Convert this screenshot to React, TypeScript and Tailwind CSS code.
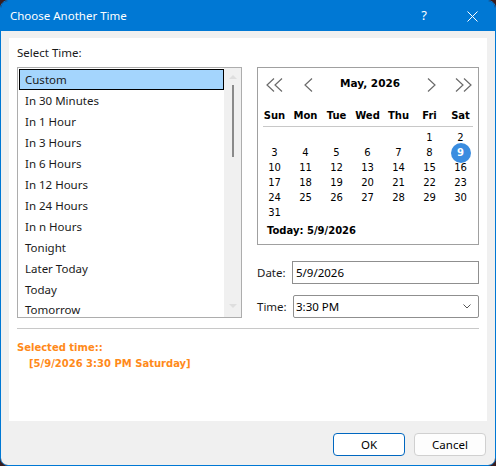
import React from 'react';

const ui = "font-['Segoe_UI','Noto_Sans',sans-serif]";
const tah = "font-['DejaVu_Sans',sans-serif]";

const items = [
  'Custom',
  'In 30 Minutes',
  'In 1 Hour',
  'In 3 Hours',
  'In 6 Hours',
  'In 12 Hours',
  'In 24 Hours',
  'In n Hours',
  'Tonight',
  'Later Today',
  'Today',
  'Tomorrow',
];

const weekdays = ['Sun', 'Mon', 'Tue', 'Wed', 'Thu', 'Fri', 'Sat'];

// May 2026 starts on a Friday
const weeks: (number | null)[][] = [
  [null, null, null, null, null, 1, 2],
  [3, 4, 5, 6, 7, 8, 9],
  [10, 11, 12, 13, 14, 15, 16],
  [17, 18, 19, 20, 21, 22, 23],
  [24, 25, 26, 27, 28, 29, 30],
  [31, null, null, null, null, null, null],
];

function Chevron({ dir, double }: { dir: 'l' | 'r'; double?: boolean }) {
  const w = double ? 17 : 9;
  const one = (x: number) =>
    dir === 'l' ? `${x + 8},0.5 ${x + 1},7 ${x + 8},13.5` : `${x + 1},0.5 ${x + 8},7 ${x + 1},13.5`;
  return (
    <svg width={w} height={14} viewBox={`0 0 ${w} 14`} className="block">
      <polyline points={one(0)} fill="none" stroke="#6b6b6b" strokeWidth="1.2" />
      {double && <polyline points={one(8)} fill="none" stroke="#6b6b6b" strokeWidth="1.2" />}
    </svg>
  );
}

function Calendar() {
  return (
    <div className={`w-[222px] h-[178px] border border-[#a0a0a0] bg-white ${tah} text-[10px] text-black`}>
      {/* Nav */}
      <div className="flex items-center h-[24px] mt-[5px] pl-[8px] pr-[6px]">
        <Chevron dir="l" double />
        <div className="ml-[21px]">
          <Chevron dir="l" />
        </div>
        <div className="flex-1 text-center font-bold text-[10.5px] -mt-[3px]">May, 2026</div>
        <Chevron dir="r" />
        <div className="ml-[19px]">
          <Chevron dir="r" double />
        </div>
      </div>

      {/* Weekday header */}
      <div className="grid grid-cols-[repeat(7,31px)] ml-[1px] mt-[11px] h-[16px] leading-[16px] font-bold">
        {weekdays.map((d) => (
          <div key={d} className="text-center">{d}</div>
        ))}
      </div>
      <div className="h-px bg-[#c8c8c8] ml-[5px] w-[210px] mt-[2px]" />

      {/* Days */}
      <div className="mt-[3px] ml-[1px]">
        {weeks.map((w, i) => (
          <div key={i} className="grid grid-cols-[repeat(7,31px)] h-[15px] leading-[15px]">
            {w.map((d, j) => (
              <div key={j} className="relative text-center">
                {d === 9 ? (
                  <span className="absolute left-1/2 top-1/2 -translate-x-1/2 -translate-y-1/2 w-[20px] h-[20px] rounded-full bg-[#3b8de0] text-white font-bold flex items-center justify-center">
                    9
                  </span>
                ) : (
                  d ?? ''
                )}
              </div>
            ))}
          </div>
        ))}
      </div>

      <div className="mt-[4px] ml-[9px] font-bold h-[14px] leading-[14px]">Today: 5/9/2026</div>
    </div>
  );
}

export default function App() {
  return (
    <div className="w-[496px] h-[466px] bg-[#3a1c1c]">
      <div className={`w-full h-full rounded-[8px] overflow-hidden border border-[#0078d4] flex flex-col ${ui}`}>
        {/* Title bar */}
        <div className="h-[30px] bg-[#0078d4] flex items-center text-white text-[11.5px] shrink-0">
          <span className="ml-[9px]">Choose Another Time</span>
          <span className="ml-auto w-[14px] text-center text-[13px] mr-[36px]">?</span>
          <svg width="11" height="11" viewBox="0 0 11 11" className="mr-[17px]">
            <path d="M0.5 0.5 L10.5 10.5 M10.5 0.5 L0.5 10.5" stroke="white" strokeWidth="1" />
          </svg>
        </div>

        {/* Body */}
        <div className="flex-1 bg-[#f0f0f0] pt-[7px] pl-[8px]">
          <div className="w-[478px] h-[383px] bg-white pl-[8px] pt-[7px] text-[11.5px] text-[#1a1a1a]">
            <div className="h-[16px] leading-[16px]">Select Time:</div>

            <div className="flex mt-[6px]">
              {/* Options list */}
              <div className="w-[225px] h-[251px] border border-[#adadad] flex overflow-hidden">
                <div className="flex-1 pt-[1px] pl-[1px] overflow-hidden">
                  {items.map((it, i) => (
                    <div
                      key={it}
                      className={
                        i === 0
                          ? 'h-[21px] leading-[19px] pl-[5px] bg-[#a4d5fd] border border-black'
                          : i === items.length - 1
                          ? 'h-[17px] leading-[19px] pl-[6px]'
                          : 'h-[21px] leading-[21px] pl-[6px]'
                      }
                    >
                      {it}
                    </div>
                  ))}
                </div>
                <div className="w-[17px] bg-[#f0f0f0] flex flex-col items-center">
                  <svg width="8" height="5" viewBox="0 0 8 5" className="mt-[6px]">
                    <polygon points="0,5 4,1 8,5" fill="#dedede" />
                  </svg>
                  <div className="w-[2px] h-[72px] bg-[#8a8a8a] mt-[6px]" />
                  <svg width="8" height="5" viewBox="0 0 8 5" className="mt-auto mb-[8px]">
                    <polygon points="0,0 4,4 8,0" fill="#dedede" />
                  </svg>
                </div>
              </div>

              {/* Right column */}
              <div className="ml-[15px] flex flex-col">
                <Calendar />
                <div className="flex items-center mt-[16px] h-[23px]">
                  <span className="w-[35px]">Date:</span>
                  <div className="w-[187px] h-[23px] border border-[#8f8f8f] pl-[3px] leading-[21px] text-black">
                    5/9/2026
                  </div>
                </div>
                <div className="flex items-center mt-[11px] h-[23px]">
                  <span className="w-[36px]">Time:</span>
                  <div className="w-[186px] h-[23px] border border-[#8f8f8f] rounded-[2px] pl-[2px] flex items-center text-black">
                    <span>3:30 PM</span>
                    <svg width="8" height="5" viewBox="0 0 8 5" className="ml-auto mr-[7px]">
                      <polyline points="0.5,0.5 4,4 7.5,0.5" fill="none" stroke="#555" strokeWidth="1" />
                    </svg>
                  </div>
                </div>
              </div>
            </div>

            <div className="w-[462px] h-px bg-[#c8c8c8] mt-[10px]" />

            <div className={`${tah} font-bold text-[10px] text-[#ff8a1a] mt-[11px] leading-[16px]`}>
              <div>Selected time::</div>
              <div className="pl-[12px]">[5/9/2026 3:30 PM Saturday]</div>
            </div>
          </div>

          {/* Buttons */}
          <div className="flex justify-end gap-[9px] mt-[12px] pr-[9px] text-[11.5px] text-black">
            <button className="w-[72px] h-[23px] bg-white border border-[#0067c0] rounded-[4px]">OK</button>
            <button className="w-[72px] h-[23px] bg-[#fdfdfd] border border-[#d0d0d0] rounded-[4px]">Cancel</button>
          </div>
        </div>
      </div>
    </div>
  );
}
